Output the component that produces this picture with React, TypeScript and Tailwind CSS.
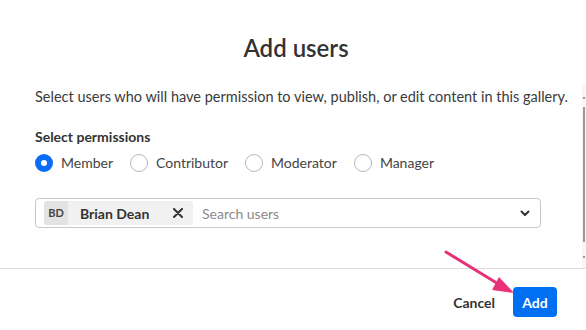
import React, { useState } from 'react';

const permissions = ['Member', 'Contributor', 'Moderator', 'Manager'];

export default function App() {
  const [role, setRole] = useState('Member');

  return (
    <div className="relative w-[586px] h-[330px] bg-white overflow-hidden font-['Lato','Noto_Sans',sans-serif] text-[#333]">
      <div className="h-[85px] pt-[33px] pl-[6px]">
        <h1 className="text-center text-[24px] leading-[30px] font-semibold text-[#333]">Add users</h1>
      </div>

      <div className="flex h-[184px] border-b border-[#dcdcdc]">
        <div className="flex-1 pl-[35px] pr-[2px] pt-[2px]">
          <p className="text-[14.5px] leading-[20px] text-[#3a3a3a] whitespace-nowrap">
            Select users who will have permission to view, publish, or edit content in this gallery.
          </p>

          <p className="mt-[20px] text-[14px] leading-[20px] font-bold text-[#333]">Select permissions</p>

          <div className="mt-[6px] flex items-center h-[20px]">
            {permissions.map((p) => (
              <label key={p} className="flex items-center mr-[17px] cursor-pointer" onClick={() => setRole(p)}>
                {role === p ? (
                  <span className="w-[18px] h-[18px] rounded-full bg-[#0b6cf5] flex items-center justify-center">
                    <span className="w-[6px] h-[6px] rounded-full bg-white" />
                  </span>
                ) : (
                  <span className="w-[18px] h-[18px] rounded-full border border-[#b8b8b8] bg-white" />
                )}
                <span className="ml-[8px] text-[14px] leading-[20px] text-[#444]">{p}</span>
              </label>
            ))}
          </div>

          <div className="mt-[25px] h-[30px] w-[506px] border border-[#c9c9c9] rounded-[4px] flex items-center pl-[8px] pr-[10px]">
            <div className="flex items-center h-[24px] w-[149px] bg-[#f1f1f1] rounded-[3px]">
              <span className="w-[24px] h-[24px] bg-[#e3e3e3] rounded-l-[3px] flex items-center justify-center text-[11px] font-bold text-[#444]">BD</span>
              <span className="ml-[12px] text-[14px] font-bold text-[#333]">Brian Dean</span>
              <svg className="ml-auto mr-[10px]" width="10" height="10" viewBox="0 0 10 10">
                <path d="M1 1 L9 9 M9 1 L1 9" stroke="#333" strokeWidth="2" strokeLinecap="round" />
              </svg>
            </div>
            <span className="ml-[9px] text-[14px] text-[#8a8a8a]">Search users</span>
            <svg className="ml-auto" width="10" height="7" viewBox="0 0 10 7">
              <path d="M1.5 1.5 L5 5 L8.5 1.5" stroke="#333" strokeWidth="2" fill="none" strokeLinecap="round" strokeLinejoin="round" />
            </svg>
          </div>
        </div>

        <div className="w-[4px] bg-[#f6f6f6] flex flex-col items-center pt-[12px] pb-[10px]">
          <div className="w-[2px] h-[2px] bg-[#999]" />
          <div className="mt-[8px] w-[2px] flex-1 bg-[#9a9a9a] mb-[14px]" />
          <div className="w-[2px] h-[2px] bg-[#999]" />
        </div>
      </div>

      <div className="flex items-center justify-end pr-[29px] mt-[18px]">
        <button className="text-[14px] font-bold text-[#333] mr-[18px]">Cancel</button>
        <button className="h-[30px] w-[44px] rounded-[4px] bg-[#006ff2] text-white text-[14px] font-bold">Add</button>
      </div>

      <svg className="absolute left-0 top-0 pointer-events-none" width="586" height="330">
        <line x1="446" y1="252" x2="500" y2="285" stroke="#e83179" strokeWidth="3" strokeLinecap="round" />
        <path d="M514 293 L492 290 L499 277 Z" fill="#e83179" />
      </svg>
    </div>
  );
}
